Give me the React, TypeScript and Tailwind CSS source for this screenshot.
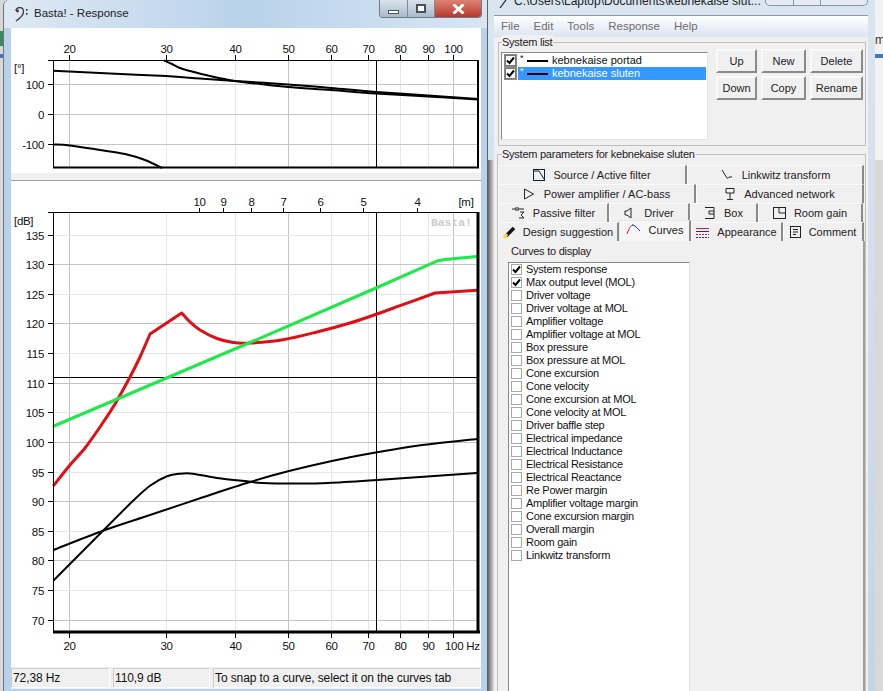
import React from "react";

const axisText = "text-[11.5px] tracking-[-0.3px] fill-[#111]";
const listText = "text-[11px] tracking-[-0.25px]";

const xTicks: [number, string, boolean][] = [
  [69, "20", true],
  [166, "30", false],
  [235, "40", false],
  [288, "50", true],
  [331, "60", false],
  [368, "70", false],
  [400, "80", false],
  [428, "90", false],
  [453, "100", true],
];

const meterTicks: [number, string][] = [
  [199, "10"],
  [223, "9"],
  [251, "8"],
  [283, "7"],
  [320, "6"],
  [363, "5"],
  [417, "4"],
];

const dbTicks = [135, 130, 125, 120, 115, 110, 105, 100, 95, 90, 85, 80, 75, 70];
const dbY = (d: number) => Math.round(620.6 - (d - 70) * 5.923) + 0.5;

type P = [number, number];

// Catmull-Rom spline through the points, so a measured curve stays smooth between kinks.
function smooth(pts: P[], move = true): string {
  let d = move ? `M${pts[0][0]} ${pts[0][1]}` : `L${pts[0][0]} ${pts[0][1]}`;
  for (let i = 0; i < pts.length - 1; i++) {
    const p0 = pts[Math.max(0, i - 1)];
    const p1 = pts[i];
    const p2 = pts[i + 1];
    const p3 = pts[Math.min(pts.length - 1, i + 2)];
    const c1x = p1[0] + (p2[0] - p0[0]) / 6;
    const c1y = p1[1] + (p2[1] - p0[1]) / 6;
    const c2x = p2[0] - (p3[0] - p1[0]) / 6;
    const c2y = p2[1] - (p3[1] - p1[1]) / 6;
    d += ` C${c1x} ${c1y} ${c2x} ${c2y} ${p2[0]} ${p2[1]}`;
  }
  return d;
}

const redPath =
  smooth([[54, 486], [70, 466], [85, 449], [100, 428], [115, 405], [130, 378], [140, 358], [150, 335]]) +
  " L181.7 314 " +
  smooth(
    [[181.7, 314], [190, 323], [200, 331], [217, 339.5], [233, 343.5], [250, 344], [283, 340.7], [317, 333], [350, 324], [377, 315], [400, 306.7], [435, 294]],
    false,
  ) +
  " L447 293.3 L477 291.3";

const greenPath = "M54 427 L250 343.5 L376 289 L438 261.7 L445 260.5 L477 257.5";

const blackA = smooth([[54, 550.7], [103, 531.7], [150, 516], [200, 499.3], [250, 483], [288, 472.3], [333, 461.7], [377, 453.3], [417, 446.7], [477, 440]]);
const blackB =
  "M54 581 L103 531.7 L133 501.7 " +
  smooth([[133, 501.7], [150, 486.7], [167, 477.3], [180, 474.7], [193, 474.7], [217, 479], [250, 482.7], [262, 484], [295, 484.5], [328, 484], [377, 481], [477, 474]], false);

const phaseA = smooth([[53, 71.7], [69, 72.5], [110, 74.5], [166, 77], [200, 79.5], [235, 82], [288, 85.5], [331, 89], [376, 93], [428, 96.5], [478, 100]]);
const phaseB = smooth([[164, 61.5], [172, 65], [180, 69], [190, 72], [210, 77], [235, 82], [260, 85], [288, 88], [331, 91], [376, 94.5], [428, 97.5], [478, 100.5]]);
const phaseC = smooth([[53, 145.5], [70, 146.5], [100, 151], [125, 155], [145, 161], [162, 169]]);

const curves = [
  "System response",
  "Max output level (MOL)",
  "Driver voltage",
  "Driver voltage at MOL",
  "Amplifier voltage",
  "Amplifier voltage at MOL",
  "Box pressure",
  "Box pressure at MOL",
  "Cone excursion",
  "Cone velocity",
  "Cone excursion at MOL",
  "Cone velocity at MOL",
  "Driver baffle step",
  "Electrical impedance",
  "Electrical Inductance",
  "Electrical Resistance",
  "Electrical Reactance",
  "Re Power margin",
  "Amplifier voltage margin",
  "Cone excursion margin",
  "Overall margin",
  "Room gain",
  "Linkwitz transform",
];

function PhaseChart() {
  return (
    <svg width={470} height={145} viewBox="11 29 470 145" className="block shrink-0 bg-white">
      {xTicks.map(([x, , major]) => (
        <line key={x} x1={x + 0.5} x2={x + 0.5} y1={62} y2={168} stroke={major ? "#c4c4c4" : "#e6e6e6"} />
      ))}
      {[85, 115, 145].map((y) => (
        <line key={y} x1={53} x2={478} y1={y + 0.5} y2={y + 0.5} stroke="#c4c4c4" />
      ))}
      {[85, 115, 145].map((y) => (
        <line key={y} x1={48} x2={53} y1={y + 0.5} y2={y + 0.5} stroke="#000" />
      ))}
      {xTicks.map(([x, label]) => (
        <g key={x}>
          <line x1={x + 0.5} x2={x + 0.5} y1={56} y2={61} stroke="#000" />
          <text x={x + 0.5} y={54} textAnchor="middle" className={axisText}>
            {label}
          </text>
        </g>
      ))}
      <text x={14} y={73} className={axisText}>[°]</text>
      <text x={44} y={90} textAnchor="end" className={axisText}>100</text>
      <text x={44} y={120} textAnchor="end" className={axisText}>0</text>
      <text x={44} y={150} textAnchor="end" className={axisText}>-100</text>
      <line x1={376.5} x2={376.5} y1={61} y2={168} stroke="#000" />
      <g fill="none" stroke="#000" strokeWidth={2} strokeLinejoin="round">
        <path d={phaseA} />
        <path d={phaseB} />
        <path d={phaseC} />
      </g>
      <line x1={48} x2={478} y1={61.5} y2={61.5} stroke="#000" />
      <line x1={53.5} x2={53.5} y1={61} y2={169} stroke="#000" />
      <line x1={53} x2={479} y1={168.5} y2={168.5} stroke="#000" strokeWidth={2} />
      <line x1={478} x2={478} y1={61} y2={169} stroke="#000" strokeWidth={2} />
    </svg>
  );
}

function ResponseChart() {
  return (
    <svg width={470} height={486} viewBox="11 182 470 486" className="block shrink-0 bg-white">
      {xTicks.map(([x, , major]) => (
        <line key={x} x1={x + 0.5} x2={x + 0.5} y1={214} y2={632} stroke={major ? "#c4c4c4" : "#e6e6e6"} />
      ))}
      {dbTicks.map((d) => (
        <line key={d} x1={53} x2={478} y1={dbY(d)} y2={dbY(d)} stroke={d % 10 === 0 ? "#c4c4c4" : "#e6e6e6"} />
      ))}
      {dbTicks.map((d) => (
        <g key={d}>
          <line x1={48} x2={53} y1={dbY(d)} y2={dbY(d)} stroke="#000" />
          <text x={44} y={dbY(d) + 4.5} textAnchor="end" className={axisText}>
            {d}
          </text>
        </g>
      ))}
      {meterTicks.map(([x, label]) => (
        <g key={x}>
          <line x1={x + 0.5} x2={x + 0.5} y1={209} y2={214} stroke="#000" />
          <text x={x + 0.5} y={207} textAnchor="middle" className={axisText}>
            {label}
          </text>
        </g>
      ))}
      <text x={466} y={207} textAnchor="middle" className={axisText}>[m]</text>
      <text x={14} y={226} className={axisText}>[dB]</text>
      {xTicks.map(([x, label]) => (
        <g key={x}>
          <line x1={x + 0.5} x2={x + 0.5} y1={634} y2={639} stroke="#000" />
          {label === "100" ? (
            <text x={445} y={651} className={axisText}>100 Hz</text>
          ) : (
            <text x={x + 0.5} y={651} textAnchor="middle" className={axisText}>
              {label}
            </text>
          )}
        </g>
      ))}
      <text x={431} y={227} className="text-[11.5px] font-bold font-['Liberation_Mono'] tracking-[-0.1px] fill-[#cccccc]">Basta!</text>
      <line x1={376.5} x2={376.5} y1={214} y2={632} stroke="#000" />
      <line x1={53} x2={478} y1={378.5} y2={378.5} stroke="#000" />
      <g fill="none" strokeLinejoin="round" strokeLinecap="round">
        <path stroke="#000" strokeWidth={2} d={blackA} />
        <path stroke="#000" strokeWidth={2} d={blackB} />
        <path stroke="#e00f16" strokeWidth={3} d={redPath} />
        <path stroke="#1fe84a" strokeWidth={3} d={greenPath} />
      </g>
      <line x1={48} x2={478} y1={213.5} y2={213.5} stroke="#000" />
      <line x1={53.5} x2={53.5} y1={213} y2={632} stroke="#000" />
      <line x1={53} x2={480} y1={633} y2={633} stroke="#000" strokeWidth={3} />
      <line x1={478} x2={478} y1={213} y2={634} stroke="#000" strokeWidth={3} />
    </svg>
  );
}

function Clef() {
  return (
    <svg width={14} height={16} viewBox="0 0 14 16" className="shrink-0">
      <path d="M1 5 C1 1 8 0 8.5 5 C9 9.5 4 13 1 15" fill="none" stroke="#333" strokeWidth={1.2} />
      <circle cx={2.5} cy={5} r={1.4} fill="#333" />
      <rect x={11} y={3} width={1.6} height={1.6} fill="#333" />
      <rect x={11} y={7} width={1.6} height={1.6} fill="#333" />
    </svg>
  );
}

function ResponseWindow() {
  return (
    <div className="absolute left-[3px] top-0 w-[484px] h-[691px] flex flex-col rounded-tl-[6px] border-l border-[#6a7580] bg-[#b9d1ea] pr-[6px] pl-[7px] pb-[5px]">
      <div className="h-[28px] shrink-0 flex items-start -mx-[7px] -mr-[6px] px-[11px] bg-linear-to-r from-[#dfe9f3] via-[#b9d2ea] to-[#d8e6f2] rounded-tl-[6px]">
        <div className="flex items-center gap-[5px] h-[28px]">
          <Clef />
          <span className="text-[11.5px] text-[#222]">Basta! - Response</span>
        </div>
        <div className="ml-auto mr-[-6px] flex h-[18px] rounded-b-[4px] border border-t-0 border-[#6d7a88] overflow-hidden">
          <div className="w-[28px] flex items-center justify-center bg-linear-to-b from-[#dbe3ec] to-[#a9bacb] border-r border-[#7d8a98]">
            <div className="w-[11px] h-[4px] mt-[6px] bg-white border border-[#48525e]" />
          </div>
          <div className="w-[27px] flex items-center justify-center bg-linear-to-b from-[#dbe3ec] to-[#a9bacb] border-r border-[#7d8a98]">
            <div className="w-[10px] h-[9px] bg-white border-[2px] border-[#48525e]" />
          </div>
          <div className="w-[46px] flex items-center justify-center bg-linear-to-b from-[#dd8273] to-[#b8352a]">
            <svg width={13} height={10} viewBox="0 0 13 10">
              <path d="M1.5 0.5 L11.5 9.5 M11.5 0.5 L1.5 9.5" stroke="#fff" strokeWidth={3} />
            </svg>
          </div>
        </div>
      </div>
      <div className="flex-1 min-h-0 w-[470px] flex flex-col border-t border-[#5a6672] bg-white">
        <div className="-mt-px"><PhaseChart /></div>
        <div className="h-[8px] shrink-0 bg-[#f0f0f0] border-b border-[#a0a0a0]" />
        <ResponseChart />
        <div className="flex-1 flex items-stretch gap-[3px] bg-[#f0f0f0] text-[12px] tracking-[-0.1px] text-[#111] pt-px pb-px">
          <div className="w-[99px] border border-[#d0d0d0] border-r-white border-b-white pl-px leading-[18px]">72,38 Hz</div>
          <div className="w-[97px] border border-[#d0d0d0] border-r-white border-b-white pl-px leading-[18px]">110,9 dB</div>
          <div className="flex-1 border border-[#d0d0d0] border-r-white border-b-white pl-px leading-[18px]">To snap to a curve, select it on the curves tab</div>
        </div>
      </div>
    </div>
  );
}

function Btn({ label, w }: { label: string; w: string }) {
  return (
    <div className={`${w} h-[24px] flex items-center justify-center text-[11px] text-[#222] bg-[#f0f0f0] border-2 border-t-[#fafafa] border-l-[#fafafa] border-r-[#8a8a8a] border-b-[#8a8a8a]`}>
      {label}
    </div>
  );
}

function TickBox({ checked, gray }: { checked: boolean; gray?: boolean }) {
  return (
    <span className={`w-[11px] h-[11px] shrink-0 flex items-center justify-center border ${gray ? "border-[#777] bg-white outline outline-[#8a8a8a]" : "border-[#a8a8a8] bg-white"}`}>
      {checked && (
        <svg width={9} height={9} viewBox="0 0 9 9">
          <path d="M1 4.5 L3.5 7 L8 1.5" fill="none" stroke="#000" strokeWidth={2} />
        </svg>
      )}
    </span>
  );
}

function SystemRow({ label, selected }: { label: string; selected?: boolean }) {
  return (
    <div className="h-[13px] flex items-center pl-[3px]">
      <TickBox checked gray />
      <span className={`ml-[2px] w-[188px] h-[13px] flex items-center pl-[2px] ${selected ? "bg-[#3399ff] text-white" : "text-[#111]"}`}>
        <span className="w-[7px] text-[9px] leading-none -mt-[5px]">*</span>
        <span className="w-[21px] h-[2px] bg-black" />
        <span className="ml-[4px] text-[11px] leading-none">{label}</span>
      </span>
    </div>
  );
}

const I = ({ children, w = 14 }: { children: React.ReactNode; w?: number }) => (
  <svg width={w} height={14} viewBox={`0 0 ${w} 14`} className="shrink-0" fill="none" stroke="#222" strokeWidth={1}>
    {children}
  </svg>
);

function Tab({ w, icon, label, gap, active }: { w: string; icon: React.ReactNode; label: string; gap: string; active?: boolean }) {
  return (
    <div
      className={`${w} ${gap} shrink-0 flex items-center justify-center text-[11px] text-[#222] ${
        active
          ? "h-[21px] -mt-[2px] pb-[2px] bg-[#f6f6f6] border-t border-l border-[#e8e8e8] border-r-2 border-r-[#8a8a8a] relative"
          : "h-[19px] border-t border-l border-[#fafafa] border-r-2 border-r-[#8a8a8a]"
      }`}
    >
      {icon}
      <span>{label}</span>
    </div>
  );
}

function Tabs() {
  return (
    <div className="flex flex-col shrink-0">
      <div className="flex">
        <Tab w="w-[189px]" gap="gap-[8px]" label="Source / Active filter" icon={<I w={12}><rect x={0.5} y={1.5} width={11} height={11} stroke="#123" /><path d="M1 3 H6 L11 11" stroke="#123" /></I>} />
        <Tab w="w-[177px]" gap="gap-[8px]" label="Linkwitz transform" icon={<I><path d="M2 2 L7 10 C8 11 9 9 9 9 H12" /></I>} />
      </div>
      <div className="flex">
        <Tab w="w-[198px]" gap="gap-[9px]" label="Power amplifier / AC-bass" icon={<I w={12}><path d="M1.5 2 L10.5 7 L1.5 12 Z" /></I>} />
        <Tab w="w-[168px]" gap="gap-[8px]" label="Advanced network" icon={<I w={12}><path d="M2 1.5 H10 V6 H2 Z M6 6 V12 M3 12.5 H9" /></I>} />
      </div>
      <div className="flex">
        <Tab w="w-[111px]" gap="gap-[8px]" label="Passive filter" icon={<I><path d="M1 3 H5 M5 1 V5 M7 1 V5 M7 3 H13 M9 6 L13 6 L10 9 L13 12 L8 12" /></I>} />
        <Tab w="w-[81px]" gap="gap-[12px]" label="Driver" icon={<I w={8}><path d="M1 5 H3 L7 2 V12 L3 9 H1 Z" /></I>} />
        <Tab w="w-[68px]" gap="gap-[9px]" label="Box" icon={<I w={11}><path d="M1 1.5 H10 V12.5 H1 M10 5 H5 V8 H10" /></I>} />
        <Tab w="w-[105px]" gap="gap-[8px]" label="Room gain" icon={<I w={13}><rect x={0.5} y={1.5} width={12} height={11} /><path d="M6 7 H12.5 M6 1.5 V7" /></I>} />
      </div>
      <div className="flex">
        <Tab w="w-[121px]" gap="gap-[6px]" label="Design suggestion" icon={<svg width={14} height={14} viewBox="0 0 14 14" className="shrink-0"><path d="M3 11 L11 3" stroke="#111" strokeWidth={3.5} /><path d="M1 13 L4 9" stroke="#f2e23a" strokeWidth={3} /></svg>} />
        <Tab active w="w-[72px]" gap="gap-[8px]" label="Curves" icon={<svg width={15} height={14} viewBox="0 0 15 14" className="shrink-0" fill="none"><path d="M1 11 C3 5 5 2 7 2" stroke="#c22" /><path d="M6 2 C9 2 11 5 14 8" stroke="#22c" /></svg>} />
        <Tab w="w-[92px]" gap="gap-[8px]" label="Appearance" icon={<svg width={13} height={14} viewBox="0 0 13 14" className="shrink-0" fill="none"><path d="M0 3.5 H13" stroke="#c22" /><path d="M0 6.5 H13" stroke="#22c" /><path d="M0 9.5 H13" stroke="#c22" strokeDasharray="2 1" /><path d="M0 12.5 H13" stroke="#22c" strokeDasharray="2 1" /></svg>} />
        <Tab w="w-[81px]" gap="gap-[8px]" label="Comment" icon={<I w={11}><rect x={0.5} y={1.5} width={10} height={11} /><path d="M3 4.5 H8 M3 7 H8 M3 9.5 H6" /></I>} />
      </div>
    </div>
  );
}

function MainWindow() {
  return (
    <div className="absolute left-[488px] top-[-9px] w-[387px] h-[710px] flex flex-col bg-[#c4d8ea] bg-linear-to-b from-[#d9e6f2] to-[#c5d4e2]">
      <div className="h-[24px] shrink-0 flex pl-[11px] items-start">
        <div className="flex items-center h-[20px] w-[266px] gap-[7px]">
          <svg width={8} height={10} viewBox="0 0 8 10" className="shrink-0 mt-[5px]"><path d="M1 9 L7 1" stroke="#222" strokeWidth={1.2} /></svg>
          <span className="text-[12px] text-[#222] whitespace-nowrap">C:\Users\Laptop\Documents\kebnekaise slut...</span>
        </div>
        <div className="flex h-[15px] w-[103px] rounded-b-[5px] border border-t-0 border-[#8a96a2] bg-[#e4ebf2]">
          <div className="w-[28px] border-r border-[#8a96a2]" />
          <div className="w-[27px] border-r border-[#8a96a2]" />
        </div>
      </div>
      <div className="flex-1 min-h-0 ml-[6px] mr-[7px] w-[374px] flex flex-col bg-[#f0f0f0] border-t border-[#8c98a4]">
        <div className="h-[21px] shrink-0 flex items-center gap-[14px] pl-[7px] bg-linear-to-b from-white to-[#dbe4f2] text-[11.5px] text-[#6d6d6d]">
          <span>File</span>
          <span>Edit</span>
          <span>Tools</span>
          <span>Response</span>
          <span>Help</span>
        </div>
        <div className="relative mt-[5px] ml-[4px] w-[368px] h-[104px] shrink-0 border border-[#c0c0c0] flex items-start pl-[2px] pt-[6px]">
          <span className={`absolute left-[3px] top-[-8px] bg-[#f0f0f0] ${listText} leading-[14px] text-[#222] pr-px`}>System list</span>
          <div className="mt-[3px] w-[207px] h-[88px] bg-white border border-[#8a8a8a] border-r-[#e4e4e4] border-b-[#e4e4e4] pt-[1px] flex flex-col">
            <SystemRow label="kebnekaise portad" />
            <SystemRow label="kebnekaise sluten" selected />
          </div>
          <div className="ml-[8px] grid grid-cols-[41px_45px_53px] grid-rows-[24px_24px] gap-x-[4px] gap-y-[3px]">
            <Btn label="Up" w="w-[41px]" />
            <Btn label="New" w="w-[45px]" />
            <Btn label="Delete" w="w-[53px]" />
            <Btn label="Down" w="w-[41px]" />
            <Btn label="Copy" w="w-[45px]" />
            <Btn label="Rename" w="w-[53px]" />
          </div>
        </div>
        <div className="relative mt-[8px] ml-[3px] w-[369px] flex-1 min-h-0 border border-b-0 border-[#c0c0c0] pt-[10px] flex flex-col">
          <span className={`absolute left-[4px] top-[-8px] bg-[#f0f0f0] ${listText} leading-[14px] text-[#222] pr-px whitespace-nowrap`}>System parameters for kebnekaise sluten</span>
          <Tabs />
          <div className="flex-1 min-h-0 w-[367px] border-r-2 border-[#a0a0a0] pl-[10px] flex flex-col">
            <div className={`h-[21px] shrink-0 flex items-center pl-[3px] ${listText} text-[#222]`}>Curves to display</div>
            <div className="flex-1 w-[182px] bg-white border border-[#8a8a8a] border-r-[#e0e0e0] pl-[2px]">
              {curves.map((c, i) => (
                <div key={c} className={`h-[13px] flex items-center gap-[4px] ${listText} leading-none text-[#111]`}>
                  <TickBox checked={i < 2} />
                  <span className="whitespace-nowrap">{c}</span>
                </div>
              ))}
            </div>
          </div>
        </div>
      </div>
    </div>
  );
}

export default function App() {
  return (
    <div className="relative w-[883px] h-[691px] overflow-hidden bg-[#d8d8d8] font-['Liberation_Sans',sans-serif]">
      <div className="absolute left-0 top-[31px] w-[3px] h-[15px] bg-[#3c8a5a]" />
      <div className="absolute left-0 top-[54px] w-[3px] h-[4px] bg-[#4a74b8]" />
      <div className="absolute left-[875px] top-0 w-[8px] h-[160px] bg-[#f2f2f2] flex flex-col">
        <span className="mt-[33px] text-[12px] leading-[14px] text-[#333]">m</span>
        <div className="mt-[7px] h-[4px] bg-[#4a74b8]" />
      </div>
      <div className="absolute left-[487px] top-0 w-[7px] h-[691px] bg-linear-to-r from-[#5a5a5a] to-[#cfd6dc]" />
      <MainWindow />
      <div className="absolute left-[487px] top-[160px] w-[7px] h-[531px] bg-linear-to-r from-[#555] to-[#e0e0e0]" />
      <ResponseWindow />
    </div>
  );
}
